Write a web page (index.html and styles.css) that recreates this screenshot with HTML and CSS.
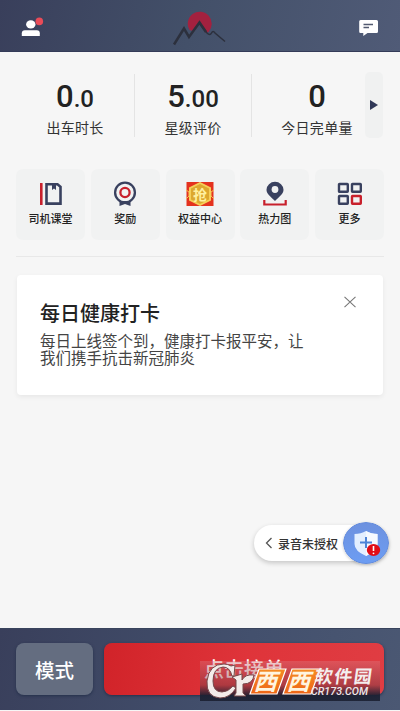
FILE: index.html
```html
<!DOCTYPE html>
<html lang="zh-CN">
<head>
<meta charset="utf-8">
<title>司机首页</title>
<link rel="stylesheet" href="styles.css">
</head>
<body>
<div class="app">
  <header class="header">
    <svg class="user" width="24" height="22" viewBox="0 0 24 22"><ellipse cx="9.800" cy="7.400" rx="4.700" ry="4.200" fill="#fff"/><path d="M.8 18.900v-2.600q0-3 3-3h12q3 0 3 3v2.600z" fill="#fff"/><circle cx="18.300" cy="4.400" r="3.800" fill="#e94b58"/></svg>
    <svg class="peak" width="56" height="36" viewBox="0 0 56 36"><path d="M17.500 19A12 12 0 1 1 36.500 21L34 22 27.500 12 21 20z" fill="#a3213f"/><path d="M27 12Q31 17 35 22Q38 25 39.500 22Q41 19 43 22L53 30.500" fill="none" stroke="#2c303d" stroke-width="1.500"/><path d="M2 33.500L12 17.500L17 26L27.500 11.500L34 21" fill="none" stroke="#2c303d" stroke-width="2.500"/></svg>
    <svg class="message" width="20" height="18" viewBox="0 0 20 18"><path d="M1.500 1h16q1.500 0 1.500 1.500v10q0 1.500-1.500 1.500H8.500L4.300 17v-3H1.500Q.2 14 .2 12.500v-10Q.2 1 1.500 1z" fill="#fff"/><path d="M4.500 5.500h9.500M4.500 8.500H10" stroke="#525a70" stroke-width="1.300"/></svg>
  </header>
  <main class="main">
    <section class="stats">
      <div class="stat"><div class="value">0<small>.0</small></div><div class="label">出车时长</div></div>
      <div class="stat"><div class="value">5<small>.00</small></div><div class="label">星级评价</div></div>
      <div class="stat"><div class="value">0</div><div class="label">今日完单量</div></div>
      <div class="next"><svg width="8" height="10" viewBox="0 0 8 10"><path d="M0 0l8 5-8 5z" fill="#303857"/></svg></div>
    </section>
    <nav class="tiles">
      <div class="tile"><svg width="26" height="26" viewBox="0 0 26 26"><path d="M3.300 2v22" stroke="#c8202c" stroke-width="2.600"/><path d="M8.500 3.300h11l3 2.500v16.800h-14z" fill="none" stroke="#39415f" stroke-width="2.600"/><path d="M14 3v6l2-1.500 2 1.500V3z" fill="#39415f"/></svg><span>司机课堂</span></div>
      <div class="tile"><svg width="26" height="26" viewBox="0 0 26 26"><circle cx="13" cy="11.500" r="9.900" fill="none" stroke="#39415f" stroke-width="2.300"/><circle cx="13" cy="11.500" r="4.600" fill="none" stroke="#c8202c" stroke-width="2.300"/><path d="M7.500 20h11v5L13 23l-5.500 2z" fill="#39415f"/></svg><span>奖励</span></div>
      <div class="tile"><svg width="28" height="26" viewBox="0 0 28 26"><path d="M.5 1h27v24H.5z" fill="#e4321e"/><path d="M0 9l3 2v4l-3 3M28 9l-3 2v4l3 3" stroke="#f2c34c" fill="none"/><path d="M14 1l11 5.500v13L14 25 3 19.500v-13z" fill="#f5cf58"/><path d="M14 3l9 4.500v11L14 23l-9-4.500v-11z" fill="#dda82e"/><text x="14" y="18.500" text-anchor="middle" class="grab">抢</text></svg><span>权益中心</span></div>
      <div class="tile"><svg width="26" height="26" viewBox="0 0 26 26"><path d="M2.300 19v4.500h21.400V19" fill="none" stroke="#c8202c" stroke-width="2.200"/><path d="M13 20C8 15 4.500 13 4.500 8.800a8.500 8 0 0 1 17 0C21.500 13 18 15 13 20z" fill="#39415f"/><circle cx="13" cy="8.500" r="3.400" fill="#f1f2f2"/></svg><span>热力图</span></div>
      <div class="tile"><svg width="26" height="26" viewBox="0 0 26 26" fill="none" stroke="#39415f" stroke-width="2.400"><rect x="2" y="3" width="8.800" height="7.800" rx=".5"/><rect x="15" y="3" width="8.800" height="7.800" rx=".5"/><rect x="2" y="15" width="8.800" height="7.800" rx=".5"/><rect x="15" y="15" width="8.800" height="7.800" rx=".5" stroke="#c8202c"/></svg><span>更多</span></div>
    </nav>
    <section class="card">
      <div class="card-text"><h2>每日健康打卡</h2><p>每日上线签个到，健康打卡报平安，让<br>我们携手抗击新冠肺炎</p></div>
      <svg class="close" width="12" height="12" viewBox="0 0 12 12"><path d="M.5.8l11 10.400M11.500.8L.5 11.200" stroke="#777" stroke-width="1.100"/></svg>
    </section>
    <div class="recording">
      <svg width="8" height="12" viewBox="0 0 8 12"><path d="M6.500 1L1.500 6l5 5" fill="none" stroke="#555" stroke-width="1.300"/></svg>
      <span>录音未授权</span>
      <svg class="shield" width="46" height="42" viewBox="0 0 46 42"><defs><linearGradient id="blue" x2="0" y2="1"><stop stop-color="#6d91df"/><stop offset="1" stop-color="#6c9df3"/></linearGradient></defs><ellipse cx="23" cy="21" rx="22.500" ry="20.500" fill="url(#blue)" stroke="#638bdb"/><path d="M23 9q5 3 11.500 3v10q0 7-11.500 12-11.500-5-11.500-12V12q6.500 0 11.500-3z" fill="#e3efff"/><path d="M23 9q5 3 11.500 3v10q0 7-11.500 12z" fill="#f5f9ff"/><path d="M17 20.500h12M23 15v11" stroke="#4d84d7" stroke-width="2"/><ellipse cx="30.500" cy="28" rx="6.700" ry="6" fill="#e10c16"/><path d="M30.500 24v5" stroke="#fff" stroke-width="1.600"/><circle cx="30.500" cy="31.300" r=".9" fill="#fff"/></svg>
    </div>
  </main>
  <footer class="footer">
    <button class="mode">模式</button>
    <button class="accept">点击接单</button>
    <div class="brand">
      <svg width="180" height="40" viewBox="0 0 180 40"><defs><linearGradient id="orange" x2="0" y2="1"><stop stop-color="#f58b24"/><stop offset="1" stop-color="#ee6517"/></linearGradient></defs>
        <path d="M35 4L34 15H32Q30 6 23 6Q13 7 13 20Q13 31 22 31Q28 31 33 25L36 27Q30 37 20 37Q6 36 7 20Q9 3 24 3Q28 3 31 5z" fill="#f3ecea" stroke="#75484b"/>
        <path d="M32 16L42 13V19Q45 13 54 14Q53 23 43 23V32L46 35H34L36 32V19z" fill="#f3ecea" stroke="#75484b"/>
        <path d="M59 8h27l-9 25H50zM92 8h28l-9 25H83z" fill="url(#orange)" stroke="#fff" stroke-width="1.200"/>
        <g transform="translate(68 29) skewX(-17)"><text class="xi" text-anchor="middle" x="-3">西</text></g><g transform="translate(101 29) skewX(-17)"><text class="xi" text-anchor="middle" x="-3">西</text></g>
        <g transform="translate(114 22) skewX(-8)"><text class="soft" textLength="57">软件园</text></g><text x="111" y="33.500" class="domain" textLength="57" lengthAdjust="spacingAndGlyphs">CR173.COM</text>
      </svg>
    </div>
  </footer>
</div>
</body>
</html>
```
FILE: styles.css
```css
* { box-sizing: border-box; }
body { margin: 0; background: #f6f6f6; color: #222; font-family: Roboto, "Noto Sans CJK SC", sans-serif; }
.app { width: 400px; height: 711px; display: flex; flex-direction: column; overflow: hidden; padding-bottom: 1px; }
svg { display: block; flex: none; }
.header { height: 52px; flex: none; display: flex; justify-content: space-between; align-items: flex-start; padding: 0 21px; background: linear-gradient(105deg, #393f5b, #435069 48%, #505b77); border-bottom: 1px solid #343b58; }
.user { margin-top: 17px; }
.peak { margin: 11px 4px 0 0; }
.message { margin-top: 19px; }
.main { flex: 1; padding: 20px 16px 0; }
.stats { height: 66px; display: grid; grid-template-columns: 119px 117px 113px 18px; }
.stat { text-align: center; border-right: 1px solid #e4e4e4; margin-top: 2px; height: 63px; }
.stat:nth-child(3) { border: 0; padding-left: 17px; white-space: nowrap; }
.value { height: 45px; line-height: 45px; font-size: 31px; font-weight: 500; }
.value small { font-size: 24px; }
.label { font-size: 14px; line-height: 19px; letter-spacing: .3px; color: #333; }
.next { display: flex; align-items: center; justify-content: center; background: #f0f1f1; border-radius: 5px; }
.tiles { height: 88px; margin-top: 31px; display: grid; grid-template-columns: repeat(5, 69px); justify-content: space-between; border-bottom: 1px solid #e8e8e8; }
.tile { height: 71px; display: flex; flex-direction: column; align-items: center; padding-top: 12px; background: #f1f2f2; border-radius: 7px; }
.tile span { margin-top: 4px; font-size: 11px; line-height: 17px; font-weight: 500; }
.grab { font-size: 14px; font-weight: 700; fill: #fff0a0; }
.card { margin: 18px 1px 0; height: 120px; background: #fff; border-radius: 4px; box-shadow: 0 2px 5px #00000010; padding: 26px 27px 0 23px; display: flex; justify-content: space-between; }
h2 { margin: 0; font-size: 20px; line-height: 27px; font-weight: 500; }
p { margin: 6px 0 0; font-size: 15.5px; line-height: 17px; color: #444; white-space: nowrap; }
.close { margin-top: -5px; }
.recording { width: 134px; height: 36px; margin: 130px 0 0 238px; display: flex; align-items: center; padding-left: 11px; background: #fff; border-radius: 18px; box-shadow: 0 2px 5px #0003; font-size: 12px; font-weight: 500; color: #333; }
.recording span { margin-left: 5px; white-space: nowrap; }
.shield { margin-left: 5px; border-radius: 50%; box-shadow: 0 1px 3px #0003; }
.footer { position: relative; height: 82px; flex: none; display: flex; padding: 14px 16px; gap: 11px; background: linear-gradient(105deg, #393f5b, #43506d 60%, #4b5873); border-top: 1px solid #39445d; }
button { border: 0; padding: 0; color: #fff; height: 52px; font: 500 19.5px Roboto, "Noto Sans CJK SC", sans-serif; border-radius: 8px; }
.mode { width: 77px; background: #646d80; box-shadow: 0 1px 3px #25304b; }
.accept { flex: 1; background: linear-gradient(100deg, #d12329, #df343a 50%, #e03d43); font-size: 20px; padding-bottom: 2px; box-shadow: 0 1px 3px #25304b; }
.brand { position: absolute; left: 200px; top: 32px; height: 40px; background: linear-gradient(#dc788066, #80404880 60%, #1b2032e6 85%); }
.xi { font-size: 23px; font-weight: 700; fill: #fff4df; }
.soft { font-size: 18px; font-weight: 700; fill: #f4eeee; }
.domain { font: italic 500 10px Roboto, sans-serif; fill: #eee8ea; }
```
